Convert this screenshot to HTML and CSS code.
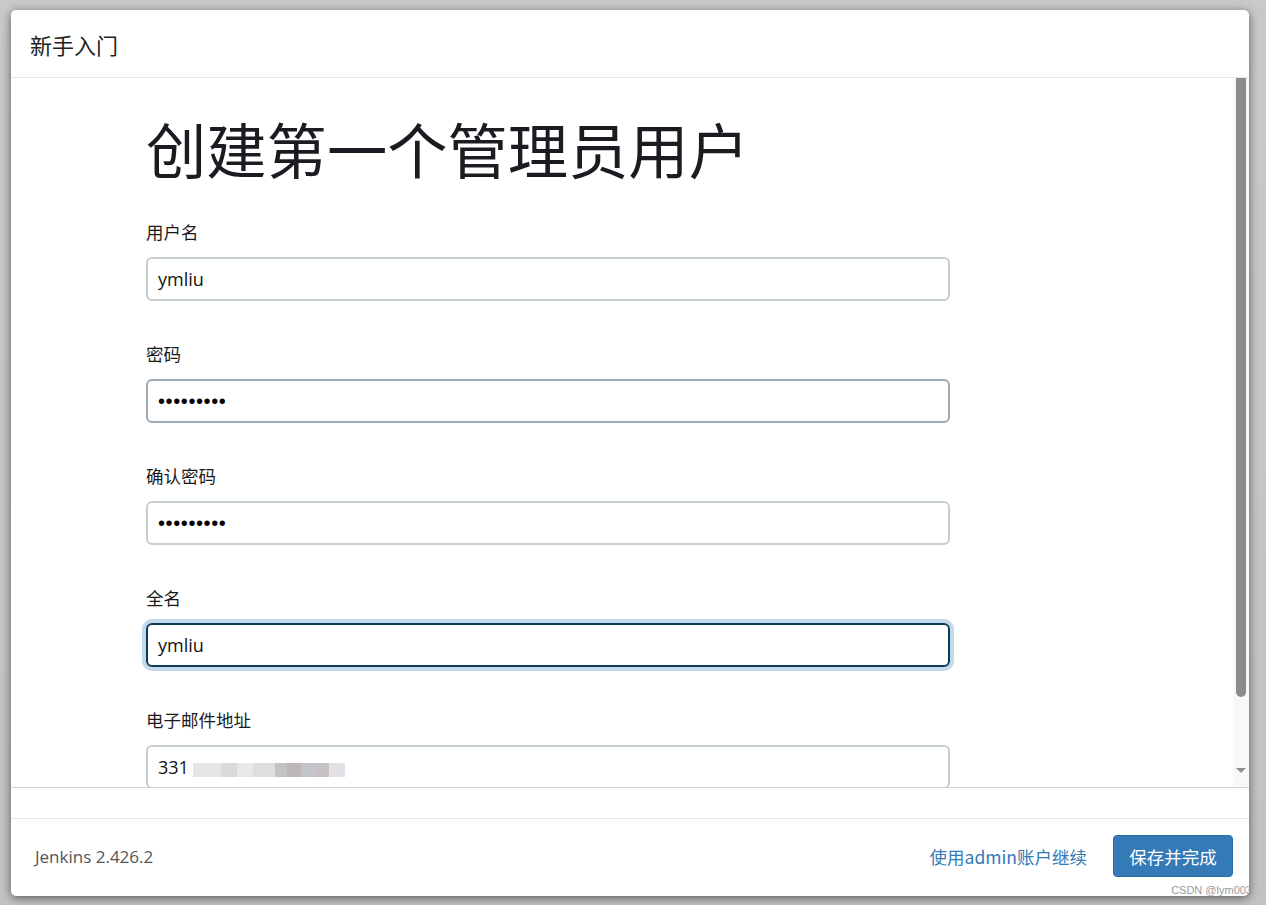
FILE: index.html
```html
<!DOCTYPE html>
<html lang="zh-CN">
<head>
<meta charset="utf-8">
<title>新手入门</title>
<link rel="stylesheet" href="styles.css">
</head>
<body>
<div class="modal">
  <div class="modal-header">新手入门</div>
  <div class="modal-body">
    <div class="scroll-content">
      <h1 class="title">创建第一个管理员用户</h1>
      <div class="field">
        <label class="label">用户名</label>
        <div class="input">ymliu</div>
      </div>
      <div class="field">
        <label class="label">密码</label>
        <div class="input input-hover dots">•••••••••</div>
      </div>
      <div class="field">
        <label class="label">确认密码</label>
        <div class="input dots">•••••••••</div>
      </div>
      <div class="field">
        <label class="label">全名</label>
        <div class="input input-focus">ymliu</div>
      </div>
      <div class="field">
        <label class="label">电子邮件地址</label>
        <div class="input">331<span class="blur"><i class="b1"></i><i class="b2"></i><i class="b3"></i><i class="b4"></i><i class="b5"></i><i class="b6"></i><i class="b7"></i><i class="b8"></i><i class="b9"></i></span></div>
      </div>
    </div>
    <div class="scrollbar">
      <div class="thumb"></div>
      <div class="arrow"></div>
    </div>
  </div>
  <div class="gap-band"></div>
  <div class="modal-footer">
    <span class="version">Jenkins 2.426.2</span>
    <div class="actions">
      <a class="link">使用admin账户继续</a>
      <button class="btn">保存并完成</button>
    </div>
  </div>
</div>
<div class="watermark">CSDN @lym003</div>
</body>
</html>
```

FILE: styles.css
```css
html, body {
  margin: 0;
  height: 100%;
}
body {
  background: linear-gradient(#c9c9c9, #c2c2c2);
  padding: 10px 17px 9px 11px;
  box-sizing: border-box;
  font-family: "Noto Sans", "Noto Sans CJK SC", sans-serif;
  color: #1f1f1f;
  position: relative;
  overflow: hidden;
}
.modal {
  background: #fff;
  border-radius: 5px;
  height: 886px;
  box-shadow: 0 2px 10px rgba(0,0,0,0.55);
  display: flex;
  flex-direction: column;
  overflow: hidden;
}
.modal-header {
  height: 67px;
  border-bottom: 1px solid #e5e5e5;
  display: flex;
  align-items: center;
  padding-left: 19px;
  font-size: 22px;
  color: #222;
  font-family: "Noto Sans CJK SC", sans-serif;
}
.modal-body {
  height: 709px;
  display: flex;
  border-bottom: 1px solid #d4d4d4;
}
.scroll-content {
  flex: 1;
  overflow: hidden;
  padding: 34px 0 0 135px;
}
.title {
  margin: 0 0 36px;
  font-size: 60.3px;
  font-weight: 400;
  line-height: 72px;
  color: #1b1b22;
  font-family: "Noto Sans CJK SC", sans-serif;
}
.field {
  margin-bottom: 41px;
}
.label {
  display: block;
  font-size: 17.5px;
  line-height: 24px;
  margin-bottom: 13px;
  color: #1a1a1a;
  font-family: "Noto Sans CJK SC", sans-serif;
}
.input {
  width: 804px;
  height: 44px;
  box-sizing: border-box;
  border: 2px solid #c5ced3;
  border-radius: 6px;
  padding: 0 10px;
  font-size: 18px;
  display: flex;
  align-items: center;
  color: #111;
  font-family: "Open Sans", "Noto Sans", sans-serif;
  position: relative;
}
.input-hover {
  border-color: #9eabb4;
}
.input-focus {
  border-color: #0d3a57;
  box-shadow: 0 0 0 4px #c1d9e8;
}
.dots {
  font-size: 20px;
  letter-spacing: 0.6px;
  font-family: "Liberation Sans", sans-serif;
  color: #000;
}
.blur {
  display: inline-flex;
  align-items: center;
  margin-left: 4px;
  height: 24px;
  filter: blur(0.6px);
}
.blur i {
  display: inline-block;
  height: 14px;
  margin-top: 6px;
}
.b1 { width: 28px; background: #e6e6e9; }
.b2 { width: 16px; background: #dadadd; }
.b3 { width: 16px; background: #e8e8ea; }
.b4 { width: 22px; background: #dedde0; }
.b5 { width: 12px; background: #c4c2c5; }
.b6 { width: 14px; background: #bdb6b8; }
.b7 { width: 14px; background: #c3c5cd; }
.b8 { width: 14px; background: #c8c1c3; }
.b9 { width: 16px; background: #e2e2e6; }
.scrollbar {
  width: 16px;
  background: #f8f8f8;
  display: flex;
  flex-direction: column;
  align-items: center;
}
.thumb {
  width: 10px;
  height: 619px;
  background: #8c8c8c;
  border-radius: 0 0 5px 5px;
}
.arrow {
  margin-top: 71px;
  width: 0;
  height: 0;
  border-left: 5px solid transparent;
  border-right: 5px solid transparent;
  border-top: 5px solid #8f8f8f;
}
.gap-band {
  height: 30px;
  border-bottom: 1px solid #e5e5e5;
}
.modal-footer {
  flex: 1;
  display: flex;
  align-items: center;
  justify-content: space-between;
  padding: 0 16px 3px 24px;
}
.version {
  font-size: 17px;
  color: #555;
  font-family: "Open Sans", "Noto Sans", sans-serif;
}
.actions {
  display: flex;
  align-items: center;
  gap: 26px;
}
.link {
  color: #337ab7;
  font-size: 17.5px;
  font-family: "Noto Sans CJK SC", sans-serif;
}
.btn {
  width: 120px;
  height: 42px;
  border: 1px solid #2e6da4;
  background: #337ab7;
  color: #fff;
  font-size: 17.5px;
  border-radius: 4px;
  font-family: "Noto Sans CJK SC", sans-serif;
  padding: 0;
}
.watermark {
  position: absolute;
  right: 14px;
  bottom: 9px;
  font-size: 11px;
  color: #9a9a9a;
  font-family: "Liberation Sans", sans-serif;
}
```
